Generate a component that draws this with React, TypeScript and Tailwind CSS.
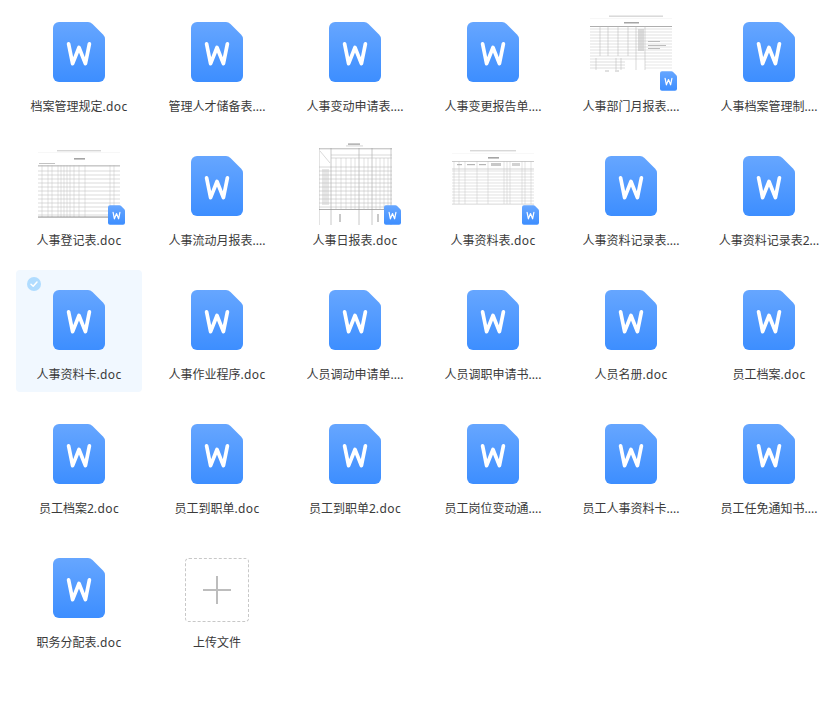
import React from "react";

type Item = { name: string; thumb?: "a" | "b" | "c" | "d"; selected?: boolean };

const items: Item[] = [
  { name: "档案管理规定.doc" },
  { name: "管理人才储备表...." },
  { name: "人事变动申请表...." },
  { name: "人事变更报告单...." },
  { name: "人事部门月报表....", thumb: "a" },
  { name: "人事档案管理制...." },
  { name: "人事登记表.doc", thumb: "b" },
  { name: "人事流动月报表...." },
  { name: "人事日报表.doc", thumb: "c" },
  { name: "人事资料表.doc", thumb: "d" },
  { name: "人事资料记录表...." },
  { name: "人事资料记录表2..." },
  { name: "人事资料卡.doc", selected: true },
  { name: "人事作业程序.doc" },
  { name: "人员调动申请单...." },
  { name: "人员调职申请书...." },
  { name: "人员名册.doc" },
  { name: "员工档案.doc" },
  { name: "员工档案2.doc" },
  { name: "员工到职单.doc" },
  { name: "员工到职单2.doc" },
  { name: "员工岗位变动通...." },
  { name: "员工人事资料卡...." },
  { name: "员工任免通知书...." },
  { name: "职务分配表.doc" },
];

function range(start: number, end: number, step: number) {
  const out: number[] = [];
  for (let v = start; v <= end; v += step) out.push(v);
  return out;
}

function DocIcon({ w, h, id }: { w: number; h: number; id: string }) {
  return (
    <svg width={w} height={h} viewBox="0 0 52 60" className="block">
      <defs>
        <linearGradient id={id} x1="0" y1="0" x2="0" y2="1">
          <stop offset="0" stopColor="#66a6ff" />
          <stop offset="1" stopColor="#3d8eff" />
        </linearGradient>
      </defs>
      <path
        d="M6 0H35Q37.5 0 39.5 2L50 12.5Q52 14.5 52 17V54A6 6 0 0 1 46 60H6A6 6 0 0 1 0 54V6A6 6 0 0 1 6 0Z"
        fill={`url(#${id})`}
      />
      <path
        d="M15.6 21.8L19.6 41.6L26 25.5L32.4 41.6L36.4 21.8"
        fill="none"
        stroke="#fff"
        strokeWidth="3.7"
        strokeLinecap="round"
        strokeLinejoin="round"
      />
    </svg>
  );
}

function Lines({ xs, ys, x1, x2, y1, y2, c = "#b5b5b5", sw = 0.7 }: { xs?: number[]; ys?: number[]; x1?: number; x2?: number; y1?: number; y2?: number; c?: string; sw?: number }) {
  return (
    <g stroke={c} strokeWidth={sw}>
      {(ys || []).map((y, i) => (
        <line key={`h${i}`} x1={x1} x2={x2} y1={y} y2={y} />
      ))}
      {(xs || []).map((x, i) => (
        <line key={`v${i}`} x1={x} x2={x} y1={y1} y2={y2} />
      ))}
    </g>
  );
}

function ThumbA() {
  return (
    <svg width="82" height="64" viewBox="0 0 82 64" className="block">
      <rect x="19" y="0.5" width="54" height="1.4" fill="#d6d6d6" />
      <rect x="0" y="3.4" width="82" height="0.5" fill="#eeeeee" />
      <rect x="34" y="7" width="15" height="1.5" fill="#a5a5a5" />
      <rect x="0" y="11" width="82" height="0.8" fill="#9a9a9a" />
      <Lines ys={range(14, 45, 3)} x1={0} x2={82} c="#cfcfcf" sw={0.6} />
      <Lines ys={range(47, 55, 3)} x1={0} x2={35} c="#c6c6c6" sw={0.6} />
      <Lines ys={range(47, 55, 3)} x1={55} x2={82} c="#d6d6d6" sw={0.6} />
      <Lines xs={[10, 18, 28, 38]} y1={11} y2={41} c="#b0b0b0" sw={0.5} />
      <Lines xs={[46, 55]} y1={11} y2={55} c="#b0b0b0" sw={0.5} />
      <rect x="48" y="14" width="6" height="22" fill="#c0c0c0" opacity="0.55" />
      <rect x="58" y="26" width="12" height="0.9" fill="#b5b5b5" />
      <rect x="58" y="30" width="18" height="0.9" fill="#b5b5b5" />
      <rect x="58" y="33" width="12" height="0.9" fill="#b5b5b5" />
      <Lines xs={[6, 26, 31]} y1={43} y2={55} c="#b0b0b0" sw={0.5} />
      <rect x="15" y="55.5" width="4" height="1" fill="#c2c2c2" />
      <rect x="25" y="55.5" width="4" height="1" fill="#c2c2c2" />
    </svg>
  );
}

function ThumbB() {
  return (
    <svg width="82" height="68" viewBox="0 0 82 68" className="block">
      <rect x="19" y="0" width="44" height="1.4" fill="#d6d6d6" />
      <rect x="0" y="2.5" width="82" height="0.5" fill="#eeeeee" />
      <rect x="36" y="8" width="11" height="1.6" fill="#a5a5a5" />
      <rect x="1" y="13" width="16" height="1" fill="#c2c2c2" />
      <rect x="0" y="15.5" width="82" height="0.8" fill="#989898" />
      <Lines ys={range(21, 67, 4)} x1={0} x2={82} c="#c2c2c2" sw={0.6} />
      <Lines xs={[4, 10, 14, 20, 23, 26, 29, 32, 36, 41, 47, 72, 76]} y1={15} y2={67} c="#bcbcbc" sw={0.45} />
      <rect x="0" y="66.6" width="82" height="0.9" fill="#808080" />
    </svg>
  );
}

function ThumbC() {
  return (
    <svg width="73" height="82" viewBox="0 0 73 82" className="block">
      <rect x="29" y="0.5" width="12" height="1.2" fill="#999" />
      <rect x="27" y="2.6" width="17" height="0.7" fill="#c4c4c4" />
      <rect x="0" y="5.5" width="73" height="0.7" fill="#9a9a9a" />
      <Lines xs={[0, 12, 40, 53, 72]} y1={5} y2={82} c="#9a9a9a" sw={0.55} />
      <Lines xs={[17, 22, 27, 32, 36, 45, 49, 57, 61, 65, 69]} y1={15} y2={66} c="#bcbcbc" sw={0.45} />
      <Lines ys={[12, 15]} x1={12} x2={73} c="#b0b0b0" sw={0.5} />
      <Lines ys={range(24, 66, 4)} x1={0} x2={73} c="#bababa" sw={0.55} />
      <rect x="0" y="66" width="73" height="0.8" fill="#9a9a9a" />
      <rect x="3" y="26" width="7" height="36" fill="#c2c2c2" opacity="0.4" />
      <line x1="1" y1="8" x2="11" y2="20" stroke="#b5b5b5" strokeWidth="0.5" />
      <rect x="20" y="71" width="2" height="8" fill="#c8c8c8" />
      <rect x="58" y="71" width="2" height="8" fill="#c8c8c8" />
    </svg>
  );
}

function ThumbD() {
  return (
    <svg width="82" height="56" viewBox="0 0 82 56" className="block">
      <rect x="18" y="0" width="46" height="1.4" fill="#d8d8d8" />
      <rect x="0" y="3" width="82" height="0.5" fill="#f0f0f0" />
      <rect x="36" y="7" width="11" height="1.6" fill="#a5a5a5" />
      <rect x="0" y="11" width="82" height="0.7" fill="#b5b5b5" />
      <Lines ys={[19]} x1={0} x2={82} c="#b5b5b5" sw={0.6} />
      <Lines ys={range(21, 54, 3)} x1={0} x2={82} c="#d6d6d6" sw={0.7} />
      <Lines xs={[2, 7, 13, 25, 36, 52, 55, 58, 70, 73, 79]} y1={11} y2={54} c="#c0c0c0" sw={0.45} />
      <rect x="5" y="14" width="5" height="1.2" fill="#b5b5b5" />
      <rect x="15" y="14" width="8" height="1.2" fill="#b5b5b5" />
      <rect x="27" y="14" width="7" height="1.2" fill="#b5b5b5" />
      <rect x="39" y="13" width="10" height="3" fill="#c8c8c8" />
      <rect x="60" y="13" width="8" height="3" fill="#d2d2d2" />
      <rect x="0" y="54" width="82" height="0.6" fill="#e0e0e0" />
    </svg>
  );
}

const thumbs = {
  a: { C: ThumbA, cls: "mt-[-7px]" },
  b: { C: ThumbB, cls: "mt-[-6px]" },
  c: { C: ThumbC, cls: "mt-[-13px]" },
  d: { C: ThumbD, cls: "mt-[-6px]" },
};

function Name({ text }: { text: string }) {
  const isDoc = text.endsWith(".doc");
  return (
    <div className="mt-[11px] whitespace-nowrap text-[12px] leading-5 text-[#3a3a3a]">
      {isDoc ? text.slice(0, -4) : text}
      {isDoc && <span className="tracking-[0.4px]">.doc</span>}
    </div>
  );
}

function Tile({ item, index }: { item: Item; index: number }) {
  const t = item.thumb ? thumbs[item.thumb] : null;
  return (
    <div className={`relative flex h-[122px] w-[126px] flex-col items-center rounded-[4px] pt-5 ${item.selected ? "bg-[#f1f8ff]" : ""}`}>
      {item.selected && (
        <span className="absolute left-[11px] top-[7px] flex h-[14px] w-[14px] items-center justify-center rounded-full bg-[#b0dcff]">
          <svg width="10" height="10" viewBox="0 0 10 10">
            <path d="M2 5.2L4.2 7.2L8 3" fill="none" stroke="#fff" strokeWidth="1.5" strokeLinecap="round" strokeLinejoin="round" />
          </svg>
        </span>
      )}
      <div className="flex h-16 w-full justify-center">
        {t ? (
          <div className={t.cls}>
            <t.C />
          </div>
        ) : (
          <DocIcon w={52} h={60} id={`g${index}`} />
        )}
      </div>
      {t && (
        <div className="absolute left-[92px] top-[69px]">
          <DocIcon w={17} h={20} id={`g${index}`} />
        </div>
      )}
      <Name text={item.name} />
    </div>
  );
}

export default function App() {
  return (
    <div className="h-[707px] w-[836px] overflow-hidden bg-white pl-4 pt-[2px] font-['Noto_Sans','Noto_Sans_CJK_SC',sans-serif]">
      <div className="grid grid-cols-[repeat(6,126px)] gap-3">
        {items.map((item, i) => (
          <Tile key={i} item={item} index={i} />
        ))}
        <div className="flex h-[122px] w-[126px] flex-col items-center pt-5">
          <div className="flex h-16 w-16 items-center justify-center rounded-[4px] border border-dashed border-[#c8c8c8]">
            <svg width="30" height="30" viewBox="0 0 30 30">
              <path d="M15 1V29M1 15H29" stroke="#bdbdbd" strokeWidth="2" />
            </svg>
          </div>
          <Name text="上传文件" />
        </div>
      </div>
    </div>
  );
}
